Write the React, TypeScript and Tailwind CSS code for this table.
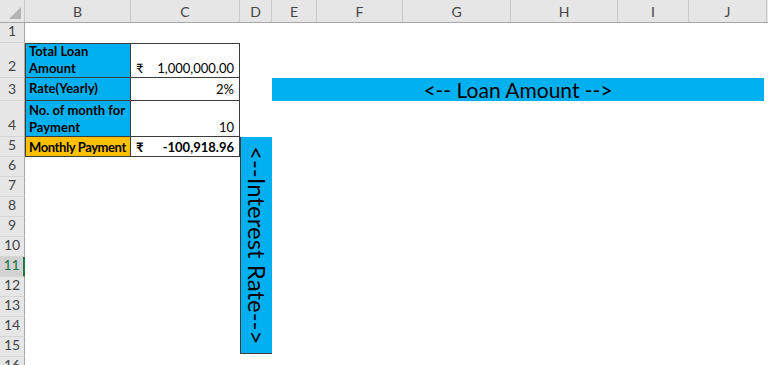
import React from 'react';

const cols = [
  { key: 'B', w: 'w-[106px]' },
  { key: 'C', w: 'w-[109px]' },
  { key: 'D', w: 'w-[32px]' },
  { key: 'E', w: 'w-[45px]' },
  { key: 'F', w: 'w-[86px]' },
  { key: 'G', w: 'w-[108px]' },
  { key: 'H', w: 'w-[107px]' },
  { key: 'I', w: 'w-[71px]' },
  { key: 'J', w: 'w-[78px]' },
];

const emptyRows = [6, 7, 8, 9, 10, 11, 12, 13, 14, 15, 16];

const RowHead: React.FC<{ n: number; h: string; active?: boolean }> = ({ n, h, active }) => (
  <div
    className={`${h} w-[25px] shrink-0 flex items-end justify-center pb-[1px] text-[14px] border-b border-[#d4d4d4] ${
      active
        ? 'bg-[#d2d2d2] text-[#217346] border-r-2 border-r-[#217346]'
        : 'bg-[#e6e6e6] text-[#444] border-r border-r-[#a6a6a6]'
    }`}
  >
    {n}
  </div>
);

const cellB = 'w-[106px] shrink-0 border-l border-r border-b border-[#3c3c3c] px-[3px] flex items-end font-bold text-[13px] leading-[17px] text-black whitespace-nowrap';
const cellC = 'w-[109px] shrink-0 border-r border-b border-[#3c3c3c] pl-[5px] pr-[5px] flex items-end justify-between text-[13px] leading-[17px] text-black';

export default function App() {
  return (
    <div className="relative w-[768px] h-[365px] overflow-hidden bg-white font-['Lato','Noto_Sans',sans-serif]">
      {/* column letters */}
      <div className="flex h-[23px] bg-[#e6e6e6] border-b border-[#a6a6a6]">
        <div className="w-[25px] shrink-0 border-r border-[#c8c8c8] relative">
          <svg className="absolute right-[3px] bottom-[3px]" width="12" height="12" viewBox="0 0 12 12">
            <polygon points="12,0 12,12 0,12" fill="#b4b4b4" />
          </svg>
        </div>
        {cols.map((c) => (
          <div
            key={c.key}
            className={`${c.w} shrink-0 border-r border-[#c8c8c8] flex items-center justify-center text-[14px] text-[#444]`}
          >
            {c.key}
          </div>
        ))}
        <div className="flex-1" />
      </div>

      {/* row 1 */}
      <div className="flex h-[20px]">
        <RowHead n={1} h="h-[20px]" />
      </div>

      {/* row 2 */}
      <div className="flex h-[35px]">
        <RowHead n={2} h="h-[35px]" />
        <div className={`${cellB} border-t bg-[#00b0f0]`}>
          <span>
            Total Loan
            <br />
            Amount
          </span>
        </div>
        <div className={`${cellC} border-t`}>
          <span>₹</span>
          <span>1,000,000.00</span>
        </div>
      </div>

      {/* row 3 */}
      <div className="flex h-[23px]">
        <RowHead n={3} h="h-[23px]" />
        <div className={`${cellB} bg-[#00b0f0] pb-[3px]`}>Rate(Yearly)</div>
        <div className={`${cellC} justify-end pb-[2px]`}>2%</div>
        <div className="w-[32px] shrink-0" />
        <div className="w-[492px] shrink-0 bg-[#00b0f0] flex items-center justify-center text-[21px] text-black">
          &lt;-- Loan Amount --&gt;
        </div>
      </div>

      {/* row 4 */}
      <div className="flex h-[36px]">
        <RowHead n={4} h="h-[36px]" />
        <div className={`${cellB} bg-[#00b0f0]`}>
          <span>
            No. of month for
            <br />
            Payment
          </span>
        </div>
        <div className={`${cellC} justify-end`}>10</div>
      </div>

      {/* row 5 */}
      <div className="flex h-[20px]">
        <RowHead n={5} h="h-[20px]" />
        <div className={`${cellB} bg-[#ffc000] items-center text-[12px] tracking-[-0.4px]`}>Monthly Payment</div>
        <div className={`${cellC} items-center font-bold`}>
          <span>₹</span>
          <span>-100,918.96</span>
        </div>
      </div>

      {emptyRows.map((n) => (
        <div key={n} className="flex h-[20px]">
          <RowHead n={n} h="h-[20px]" active={n === 11} />
        </div>
      ))}

      {/* rotated label shape over column D */}
      <div className="absolute left-[240px] top-[137px] w-[32px] h-[217px] bg-[#00b0f0] border-l border-b border-[#3c3c3c] flex items-center justify-center">
        <span className="[writing-mode:vertical-rl] text-[24px] leading-[30px] text-black whitespace-nowrap">
          &lt;--Interest Rate--&gt;
        </span>
      </div>
    </div>
  );
}
